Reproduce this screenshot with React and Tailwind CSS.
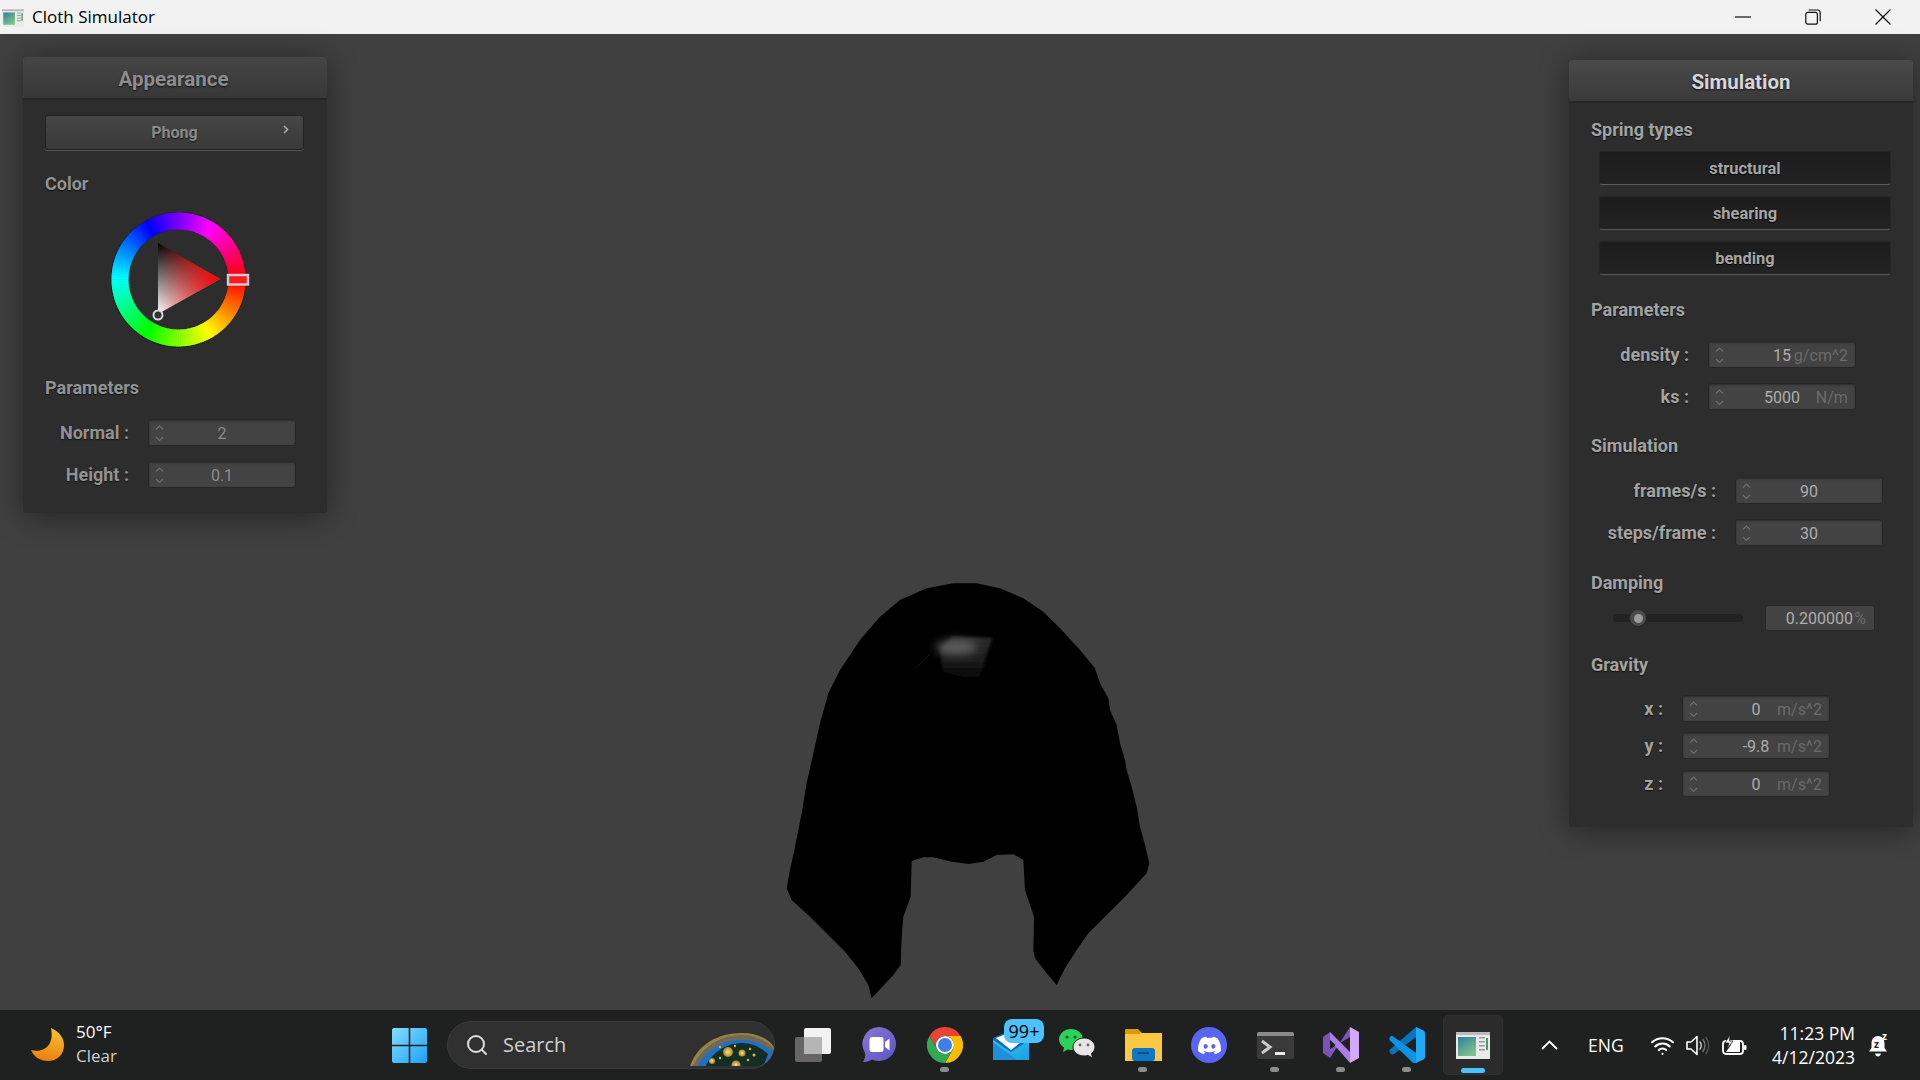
import { Search, Wifi } from "lucide-react";
import { FaDiscord } from "react-icons/fa";

const labelCls = "text-[18px] leading-[22px] font-bold [text-shadow:0_1px_1px_#111]";

// little up/down arrows of a number box
function Spinner() {
  return (
    <svg width="9" height="20" viewBox="0 0 9 20" fill="none" stroke="#6e6e6e" strokeWidth="1.2" className="shrink-0">
      <polyline points="1,6.5 4.5,3 8,6.5" />
      <polyline points="1,14 4.5,17.5 8,14" />
    </svg>
  );
}

function NumberBox({ value, unit, dim }) {
  return (
    <div className="relative w-[148px] h-[27px] rounded-[3px] bg-[#434343] border border-[#272727] shadow-[inset_0_1px_2px_#2c2c2c] flex items-center justify-center">
      <div className="absolute left-[6px] top-[3px]">
        <Spinner />
      </div>
      <span className={`pt-[2px] text-[16px] leading-none ${dim ? "text-[#8c8c8c]" : "text-[#adadad]"}`}>{value}</span>
      {unit && <span className="absolute right-[7px] top-[6px] text-[16px] leading-none tracking-[0.1px] text-[#6a6a6a]">{unit}</span>}
    </div>
  );
}

function Row({ label, labelCl, textCl, className, children }) {
  return (
    <div className={`flex items-center ${className}`}>
      <div className={`${labelCl} ${textCl} text-right mr-[19px] ${labelCls}`}>{label}</div>
      {children}
    </div>
  );
}

function PushButton({ label, className }) {
  return (
    <div className={`w-[292px] h-[34px] ml-[30px] pt-[2px] rounded-[3px] bg-gradient-to-b from-[#1c1c1c] to-[#232323] border border-[#262626] border-b-[#5a5a5a] flex items-center justify-center text-[16.4px] font-bold text-[#a6a6a6] [text-shadow:0_1px_1px_#000] ${className}`}>
      {label}
    </div>
  );
}

function ColorWheel() {
  const cx = 67.5;
  const cy = 67.5;
  const segs = Array.from({ length: 180 }, (_, i) => {
    const a0 = ((i * 2 - 0.3) * Math.PI) / 180;
    const a1 = (((i + 1) * 2 + 0.3) * Math.PI) / 180;
    const pt = (r, a) => `${cx + r * Math.cos(a)} ${cy + r * Math.sin(a)}`;
    return {
      d: `M${pt(67, a0)} A67 67 0 0 1 ${pt(67, a1)} L${pt(50, a1)} A50 50 0 0 0 ${pt(50, a0)} Z`,
      fill: `hsl(${i * 2},100%,50%)`,
    };
  });
  return (
    <svg width="142" height="140" viewBox="0 0 142 140" className="ml-[88px] mt-[17px] block">
      <defs>
        <linearGradient id="triBase" x1="0" y1="0" x2="0" y2="1">
          <stop offset="0" stopColor="#000" />
          <stop offset="1" stopColor="#fff" />
        </linearGradient>
        <linearGradient id="triHue" x1="0" y1="0" x2="1" y2="0">
          <stop offset="0" stopColor="#ff0000" stopOpacity="0" />
          <stop offset="1" stopColor="#ff0000" />
        </linearGradient>
      </defs>
      <circle cx={cx} cy={cy} r="68" fill="#222" />
      <circle cx={cx} cy={cy} r="50" fill="#2d2d2d" />
      {segs.map((s, i) => (
        <path key={i} d={s.d} fill={s.fill} />
      ))}
      <polygon points="47,31 109,67 47,102" fill="url(#triBase)" />
      <polygon points="47,31 109,67 47,102" fill="url(#triHue)" />
      <rect x="117" y="63" width="20" height="9.5" fill="#ff1a22" stroke="#cfcfcf" strokeWidth="2.4" />
      <circle cx="47" cy="103" r="4.5" fill="#333" stroke="#d8d8d8" strokeWidth="2" />
    </svg>
  );
}

function Cloth() {
  return (
    <svg width="400" height="440" viewBox="0 0 1200 1320" className="absolute left-[760px] top-[536px]">
      <defs>
        <linearGradient id="specBody" x1="0" y1="0" x2="0" y2="1">
          <stop offset="0" stopColor="#2c2c2c" />
          <stop offset="0.55" stopColor="#1a1a1a" />
          <stop offset="1" stopColor="#000" />
        </linearGradient>
        <filter id="specSoft" x="-30%" y="-30%" width="160%" height="160%">
          <feGaussianBlur stdDeviation="4" />
        </filter>
        <filter id="specGlow" x="-60%" y="-100%" width="220%" height="300%">
          <feGaussianBlur stdDeviation="14" />
        </filter>
      </defs>
      <path
        fill="#000"
        d="M335 1285 L325 1245 295 1195 255 1145 210 1100 150 1040 95 990 80 955 90 900 105 830 125 730 140 640 160 550 180 460 205 370 240 300 300 210 360 140 420 90 500 55 580 40 650 40 720 55 790 85 850 125 900 175 960 240 1005 295 1020 340 1045 385 1050 420 1070 465 1080 520 1095 570 1100 600 1115 650 1130 710 1140 770 1155 825 1168 880 1160 910 1100 975 1040 1035 985 1090 950 1140 915 1195 890 1245 860 1210 825 1165 820 1140 822 1040 795 960 790 870 760 853 710 855 670 875 625 882 575 875 520 862 490 862 455 873 452 980 430 1040 425 1100 422 1185 400 1215 Z"
      />
      <polygon points="540,240 575,200 697,203 655,335 548,305" fill="url(#specBody)" filter="url(#specSoft)" />
      <ellipse cx="590" cy="232" rx="62" ry="22" fill="#5e5e5e" filter="url(#specGlow)" />
      <line x1="465" y1="297" x2="510" y2="252" stroke="#1c1c1c" strokeWidth="2" />
    </svg>
  );
}

function AppGlyph({ w, h }) {
  return (
    <svg width={w} height={h} viewBox="0 0 34 27">
      <defs>
        <linearGradient id="appPane" x1="0" y1="0" x2="0.6" y2="1">
          <stop offset="0" stopColor="#2f7f9a" />
          <stop offset="1" stopColor="#7fc28d" />
        </linearGradient>
      </defs>
      <rect width="34" height="27" fill="#e9eaea" />
      <rect width="34" height="3" fill="#b9bcbe" />
      <rect x="2" y="5" width="18" height="19" fill="url(#appPane)" />
      <rect x="23" y="5" width="6" height="1.5" fill="#9a9a9a" />
      <rect x="23" y="9" width="6" height="1.5" fill="#9a9a9a" />
      <rect x="23" y="13" width="6" height="1.5" fill="#9a9a9a" />
      <rect x="23" y="17" width="6" height="1.5" fill="#9a9a9a" />
      <rect x="30" y="6" width="2" height="12" fill="#4d9a5c" />
    </svg>
  );
}

function WinLogo() {
  return (
    <svg width="35" height="35" viewBox="0 0 35 35">
      <defs>
        <linearGradient id="winA" x1="0" y1="0" x2="1" y2="1">
          <stop offset="0" stopColor="#86dcff" />
          <stop offset="1" stopColor="#1aa3f5" />
        </linearGradient>
      </defs>
      <path d="M2 0H16.7V16.7H0V2A2 2 0 0 1 2 0Z M18.3 0H33A2 2 0 0 1 35 2V16.7H18.3Z M0 18.3H16.7V35H2A2 2 0 0 1 0 33Z M18.3 18.3H35V33A2 2 0 0 1 33 35H18.3Z" fill="url(#winA)" />
    </svg>
  );
}

function SearchArt() {
  return (
    <svg width="84" height="48" viewBox="0 0 84 48" className="absolute right-0 top-0">
      <defs>
        <clipPath id="artClip">
          <path d="M0 44 C8 22 28 11 52 11 C66 11 78 16 84 25 V30 C84 38 76 44 68 44 Z" />
        </clipPath>
        <radialGradient id="glow">
          <stop offset="0" stopColor="#ffe27a" />
          <stop offset="1" stopColor="#a8832a" />
        </radialGradient>
      </defs>
      <g clipPath="url(#artClip)">
        <rect width="84" height="48" fill="#9c8240" />
        <path d="M2 46 C11 25 30 13 52 13 C66 13 76 18 84 27 V48 H2Z" fill="#6d6a5a" />
        <path d="M5 48 C14 30 30 18 52 18 C64 18 74 22 84 31 V48 Z" fill="#1f6fc4" />
        <path d="M14 48 C20 31 36 21 52 21 C62 21 70 25 78 32 L72 48 Z" fill="#142e24" />
        <circle cx="38" cy="30" r="5" fill="url(#glow)" />
        <circle cx="52" cy="31" r="3.5" fill="url(#glow)" />
        <circle cx="46" cy="43" r="4.5" fill="url(#glow)" />
        <circle cx="22" cy="39" r="3" fill="url(#glow)" />
        <circle cx="30" cy="25" r="1.2" fill="#d7b64d" />
        <circle cx="45" cy="24" r="1.2" fill="#d7b64d" />
        <circle cx="60" cy="27" r="1.2" fill="#d7b64d" />
        <circle cx="64" cy="33" r="1.5" fill="#d7b64d" />
        <circle cx="58" cy="38" r="1.2" fill="#d7b64d" />
        <circle cx="30" cy="36" r="1.2" fill="#d7b64d" />
      </g>
    </svg>
  );
}

function TaskView() {
  return (
    <svg width="36" height="34" viewBox="0 0 36 34">
      <rect x="9" y="0" width="27" height="26" rx="2" fill="#f2f2f2" />
      <rect x="0" y="9" width="27" height="25" rx="2" fill="#6d6d6d" fillOpacity="0.92" />
      <rect x="9" y="9" width="18" height="17" fill="#b5b5b5" />
    </svg>
  );
}

function ChatIcon() {
  return (
    <svg width="34" height="36" viewBox="0 0 34 36">
      <defs>
        <linearGradient id="chatG" x1="0" y1="0" x2="1" y2="1">
          <stop offset="0" stopColor="#8a76d6" />
          <stop offset="1" stopColor="#5a55c4" />
        </linearGradient>
      </defs>
      <path d="M17 0A17 17 0 1 1 10 32.5C7 34.5 4 35 1 35C3 32 3.5 29 3 26A17 17 0 0 1 17 0Z" fill="url(#chatG)" />
      <rect x="7.5" y="10" width="14" height="15" rx="2.5" fill="#fff" />
      <path d="M23 15L27.5 11.5V23.5L23 20Z" fill="#fff" />
    </svg>
  );
}

function ChromeIcon() {
  return (
    <svg width="36" height="36" viewBox="0 0 36 36">
      <path d="M2.4 9A18 18 0 0 1 33.6 9H18A9 9 0 0 0 10.2 22.5Z" fill="#ea4335" />
      <path d="M33.6 9A18 18 0 0 1 18 36L25.8 22.5A9 9 0 0 0 18 9Z" fill="#fbbc04" />
      <path d="M18 36A18 18 0 0 1 2.4 9L10.2 22.5A9 9 0 0 0 25.8 22.5Z" fill="#34a853" />
      <circle cx="18" cy="18" r="9" fill="#fff" />
      <circle cx="18" cy="18" r="7" fill="#3d7fe6" />
    </svg>
  );
}

function MailIcon() {
  return (
    <div className="relative w-[36px] h-[30px]">
      <svg width="36" height="30" viewBox="0 0 36 30" className="absolute left-0 top-0">
        <defs>
          <linearGradient id="mailG" x1="0" y1="0" x2="1" y2="1">
            <stop offset="0" stopColor="#36c4f6" />
            <stop offset="1" stopColor="#1b9de2" />
          </linearGradient>
        </defs>
        <path d="M0 8L18 0L36 8V30H0Z" fill="#0f6cbd" />
        <path d="M3 8L18 2L33 8L18 20Z" fill="#fff" />
        <path d="M0 10L18 22L36 10V30H0Z" fill="url(#mailG)" />
        <path d="M0 30V12L24 30Z" fill="#1f8fd8" />
      </svg>
      <div className="absolute left-[11px] top-[-11px] w-[40px] h-[24px] rounded-[8px] bg-[#4cc2ff] flex items-center justify-center text-[18px] leading-none text-black font-['Open_Sans',sans-serif]">
        99+
      </div>
    </div>
  );
}

function WeChatIcon() {
  return (
    <svg width="36" height="32" viewBox="0 0 36 32">
      <path d="M12 0C18.6 0 24 4.7 24 10.5S18.6 21 12 21C10.8 21 9.7 20.8 8.6 20.5L4 23L5 18.5C2 16.6 0 13.7 0 10.5C0 4.7 5.4 0 12 0Z" fill="#2ed158" />
      <circle cx="8" cy="8" r="1.6" fill="#155f2b" />
      <circle cx="16" cy="8" r="1.6" fill="#155f2b" />
      <path d="M25 9C31 9 36 13 36 18C36 20.6 34.6 22.9 32.5 24.5L33.5 29L29 26.4C27.7 26.8 26.4 27 25 27C19 27 14 23 14 18S19 9 25 9Z" fill="#e6e6e6" stroke="#1f2020" strokeWidth="1" />
      <circle cx="21" cy="16" r="1.4" fill="#666" />
      <circle cx="29" cy="16" r="1.4" fill="#666" />
    </svg>
  );
}

function FolderIcon() {
  return (
    <svg width="37" height="32" viewBox="0 0 37 32">
      <path d="M1 0H13L17 4H37V8H0V1A1 1 0 0 1 1 0Z" fill="#d89c0c" />
      <path d="M0 5H14L17 4H37V32H0Z" fill="#fcc83f" />
      <rect x="7" y="19" width="23" height="13" rx="3" fill="#0f77c6" />
      <rect x="13" y="23" width="11" height="2" fill="#0a4f8a" />
    </svg>
  );
}

function DiscordIcon() {
  return (
    <div className="w-[36px] h-[36px] rounded-full bg-[#5865f2] flex items-center justify-center text-white">
      <FaDiscord size={25} />
    </div>
  );
}

function TerminalIcon() {
  return (
    <svg width="37" height="27" viewBox="0 0 37 27">
      <rect width="37" height="27" rx="2" fill="#3a3a3a" />
      <path d="M2 0H35A2 2 0 0 1 37 2V4H0V2A2 2 0 0 1 2 0Z" fill="#8a8a8a" />
      <polyline points="5,9 13,15 5,21" fill="none" stroke="#c9c9c9" strokeWidth="3" />
      <rect x="18" y="20" width="10" height="3" fill="#f0f0f0" />
    </svg>
  );
}

function VsIcon() {
  return (
    <svg width="36" height="36" viewBox="0 0 36 36">
      <path d="M0 10L7 5V31L0 26Z" fill="#7a52b8" />
      <path d="M7 31L27 0V10L7 22Z" fill="#7d56bb" />
      <path d="M7 5L27 25V36L7 13Z" fill="#ab7ee6" />
      <path d="M7 13L12.5 18L7 22Z" fill="#1f2020" />
      <path d="M27 0L36 5V31L27 36Z" fill="#d2a8f8" />
    </svg>
  );
}

function CodeIcon() {
  return (
    <svg width="36" height="36" viewBox="0 0 36 36">
      <path d="M27 0V10L5 27Q3 28 1.5 26.5L0.5 25Q0 23.5 1 22.5Z" fill="#0874bd" />
      <path d="M3.5 9Q2.5 8.5 1.5 9.5L0.5 11Q0 12.5 1 13.5L24 36H27V26Z" fill="#0a94e2" />
      <path d="M27 0L34.5 3.5Q36 4.5 36 6V30Q36 31.5 34.5 32.5L27 36Z" fill="#1eaaf5" />
    </svg>
  );
}

function Speaker() {
  return (
    <svg width="24" height="21" viewBox="0 0 24 21" fill="none" strokeLinecap="round">
      <path d="M1 7H5L11 1.5V19.5L5 14H1Z" stroke="#fff" strokeWidth="1.6" strokeLinejoin="round" />
      <path d="M14 7C15.5 9 15.5 12 14 14" stroke="#c8c8c8" strokeWidth="1.4" />
      <path d="M17 4.5C19.5 8 19.5 13 17 16.5" stroke="#777" strokeWidth="1.3" />
      <path d="M20 2.5C23.5 7 23.5 14 20 18.5" stroke="#555" strokeWidth="1.3" />
    </svg>
  );
}

function Battery() {
  return (
    <svg width="25" height="21" viewBox="0 0 25 21" fill="none">
      <rect x="1" y="6" width="20" height="13" rx="3" stroke="#fff" strokeWidth="1.8" />
      <rect x="22" y="10" width="2.5" height="5" rx="1" fill="#fff" />
      <path d="M9 6H18V17H4L9 10Z" fill="#fff" />
      <path d="M8 0L3 8H7L5 14L11 6H7.5Z" fill="#fff" stroke="#1f2020" strokeWidth="0.8" />
    </svg>
  );
}

function BellZz() {
  return (
    <svg width="22" height="28" viewBox="0 -4 22 28">
      <path d="M10 3C5 3 3.5 7 3.5 11V15L1 18.5H19L16.5 15V11C16.5 7 15 3 10 3Z" fill="#fff" />
      <path d="M7 20.5H13C12.6 22.4 11.5 23.5 10 23.5S7.4 22.4 7 20.5Z" fill="#fff" />
      <text x="6" y="15" fontSize="10" fontWeight="700" fill="#1f2020" fontFamily="Noto Sans">z</text>
      <text x="14" y="7" fontSize="10" fontWeight="700" fill="#fff" fontFamily="Noto Sans">z</text>
    </svg>
  );
}

function Slot({ dot, children }) {
  return (
    <div className="relative w-[66px] h-[60px] shrink-0 flex items-center justify-center">
      {children}
      {dot && <div className="absolute left-[28px] bottom-[3px] w-[9px] h-[5px] rounded-full bg-[#8c8c8c]" />}
    </div>
  );
}

function ActiveSlot({ children }) {
  return (
    <div className="relative w-[60px] h-[60px] mx-[3px] shrink-0 rounded-[5px] bg-[#2b2b2b] border border-[#303030] flex items-center justify-center">
      {children}
      <div className="absolute left-[17px] bottom-[1px] w-[24px] h-[5px] rounded-full bg-[#4cc2ff]" />
    </div>
  );
}

export default function App() {
  return (
    <div className="w-[1920px] h-[1080px] flex flex-col overflow-hidden font-['Roboto',sans-serif] bg-[#404040]">
      {/* title bar */}
      <div className="h-[34px] shrink-0 bg-[#f2f2f2] flex items-center">
        <div className="ml-[2px] mt-[1px] flex">
          <AppGlyph w={22} h={18} />
        </div>
        <span className="ml-[8px] text-[17px] text-black font-['Open_Sans',sans-serif]">Cloth Simulator</span>
        <div className="ml-auto flex mr-[2px]">
          <div className="w-[70px] h-[34px] flex items-center justify-center">
            <svg width="16" height="2" viewBox="0 0 16 2"><rect width="16" height="1.2" y="0.4" fill="#111" /></svg>
          </div>
          <div className="w-[70px] h-[34px] flex items-center justify-center">
            <svg width="16" height="16" viewBox="0 0 16 16" fill="none" stroke="#111" strokeWidth="1.2">
              <rect x="0.8" y="3.4" width="11.6" height="11.8" rx="2" />
              <path d="M3.6 1H12.6A2.8 2.8 0 0 1 15.2 3.8V12.2" />
            </svg>
          </div>
          <div className="w-[70px] h-[34px] flex items-center justify-center">
            <svg width="16" height="16" viewBox="0 0 16 16" stroke="#111" strokeWidth="1.2">
              <line x1="0.5" y1="0.5" x2="15.5" y2="15.5" />
              <line x1="15.5" y1="0.5" x2="0.5" y2="15.5" />
            </svg>
          </div>
        </div>
      </div>

      {/* gl canvas with floating windows */}
      <div className="relative flex-1 bg-[#404040]">
        <Cloth />

        {/* Appearance */}
        <div className="absolute left-[23px] top-[23px] w-[304px] h-[456px] rounded-[3px] bg-[#2d2d2d] shadow-[0_3px_30px_rgba(0,0,0,0.45)]">
          <div className="h-[43px] pt-[4px] pr-[3px] rounded-t-[3px] bg-gradient-to-b from-[#454545] to-[#383838] border-b-2 border-[#262626] flex items-center justify-center text-[20.5px] font-bold text-[#8e8e8e] [text-shadow:0_1px_2px_#111]">
            Appearance
          </div>
          <div className="relative ml-[22px] mt-[15px] w-[259px] h-[35px] pt-[1px] rounded-[3px] bg-gradient-to-b from-[#464646] to-[#393939] border border-[#222222] shadow-[0_1px_0_#555555] flex items-center justify-center text-[16px] font-bold text-[#8c8c8c] [text-shadow:0_1px_1px_#111]">
            Phong
            <svg width="6" height="9" viewBox="0 0 6 9" fill="none" stroke="#aaaaaa" strokeWidth="1.5" className="absolute right-[14px] top-[9px]">
              <polyline points="1,1 4.5,4.5 1,8" />
            </svg>
          </div>
          <div className={`ml-[22px] mt-[23px] text-[#939393] ${labelCls}`}>Color</div>
          <ColorWheel />
          <div className={`ml-[22px] mt-[25px] text-[#939393] ${labelCls}`}>Parameters</div>
          <Row label="Normal :" labelCl="w-[106px]" textCl="text-[#939393]" className="mt-[20px]">
            <NumberBox value="2" dim />
          </Row>
          <Row label="Height :" labelCl="w-[106px]" textCl="text-[#939393]" className="mt-[15px]">
            <NumberBox value="0.1" dim />
          </Row>
        </div>

        {/* Simulation */}
        <div className="absolute left-[1569px] top-[26px] w-[344px] h-[767px] rounded-[3px] bg-[#2d2d2d] shadow-[0_3px_30px_rgba(0,0,0,0.45)]">
          <div className="h-[43px] pt-[4px] rounded-t-[3px] bg-gradient-to-b from-[#4a4a4a] to-[#3a3a3a] border-b-2 border-[#262626] flex items-center justify-center text-[20.5px] font-bold text-[#d6d6d6] [text-shadow:0_1px_2px_#111]">
            Simulation
          </div>
          <div className={`ml-[22px] mt-[16px] text-[#a3a3a3] ${labelCls}`}>Spring types</div>
          <PushButton label="structural" className="mt-[10px]" />
          <PushButton label="shearing" className="mt-[11px]" />
          <PushButton label="bending" className="mt-[11px]" />

          <div className={`ml-[22px] mt-[24px] text-[#a3a3a3] ${labelCls}`}>Parameters</div>
          <Row label="density :" labelCl="w-[120px]" textCl="text-[#a3a3a3]" className="mt-[20px]">
            <NumberBox value="15" unit="g/cm^2" />
          </Row>
          <Row label="ks :" labelCl="w-[120px]" textCl="text-[#a3a3a3]" className="mt-[15px]">
            <NumberBox value="5000" unit="N/m" />
          </Row>

          <div className={`ml-[22px] mt-[25px] text-[#a3a3a3] ${labelCls}`}>Simulation</div>
          <Row label="frames/s :" labelCl="w-[147px]" textCl="text-[#a3a3a3]" className="mt-[20px]">
            <NumberBox value="90" />
          </Row>
          <Row label="steps/frame :" labelCl="w-[147px]" textCl="text-[#a3a3a3]" className="mt-[15px]">
            <NumberBox value="30" />
          </Row>

          <div className={`ml-[22px] mt-[26px] text-[#a3a3a3] ${labelCls}`}>Damping</div>
          <div className="mt-[11px] ml-[44px] flex items-center">
            <div className="relative w-[130px] h-[8px] rounded-full bg-[#222222]">
              <div className="absolute left-[16px] top-[-5px] w-[18px] h-[18px] rounded-full bg-[#4a4a4a] border border-[#252525] flex items-center justify-center">
                <div className="w-[9px] h-[9px] rounded-full bg-[#9a9a9a]" />
              </div>
            </div>
            <div className="relative ml-[22px] w-[110px] h-[26px] pt-[2px] rounded-[3px] bg-[#434343] border border-[#272727] flex items-center justify-end pr-[21px] text-[16px] leading-none text-[#adadad]">
              0.200000
              <span className="absolute right-[8px] top-[5px] text-[16px] leading-none text-[#6a6a6a]">%</span>
            </div>
          </div>

          <div className={`ml-[22px] mt-[23px] text-[#a3a3a3] ${labelCls}`}>Gravity</div>
          <Row label="x :" labelCl="w-[94px]" textCl="text-[#a3a3a3]" className="mt-[19px]">
            <NumberBox value="0" unit="m/s^2" />
          </Row>
          <Row label="y :" labelCl="w-[94px]" textCl="text-[#a3a3a3]" className="mt-[10px]">
            <NumberBox value="-9.8" unit="m/s^2" />
          </Row>
          <Row label="z :" labelCl="w-[94px]" textCl="text-[#a3a3a3]" className="mt-[11px]">
            <NumberBox value="0" unit="m/s^2" />
          </Row>
        </div>
      </div>

      {/* taskbar */}
      <div className="h-[70px] shrink-0 bg-[#1f2020] flex items-center font-['Open_Sans',sans-serif]">
        <div className="w-[376px] shrink-0 flex items-center pl-[31px]">
          <svg width="33" height="34" viewBox="0 0 33 34">
            <defs>
              <linearGradient id="moonG" x1="0.6" y1="0" x2="0.4" y2="1">
                <stop offset="0" stopColor="#f7c32e" />
                <stop offset="1" stopColor="#ec7d12" />
              </linearGradient>
            </defs>
            <path d="M20 0C30 4 33 12 33 17C33 27 26 33 17 33C9 33 3 29 0 22C10 25 24 20 20 0Z" fill="url(#moonG)" />
          </svg>
          <div className="ml-[12px] mb-[2px] flex flex-col">
            <span className="text-[17px] leading-[24px] text-white">50°F</span>
            <span className="text-[17px] leading-[24px] text-[#cfcfcf]">Clear</span>
          </div>
        </div>
        <Slot>
          <WinLogo />
        </Slot>
        <div className="relative ml-[5px] w-[328px] h-[48px] shrink-0 rounded-full bg-[#303030] border border-[#3a3a3a] flex items-center pl-[17px] overflow-hidden">
          <Search size={24} color="#dddddd" strokeWidth={2} />
          <span className="ml-[14px] text-[20px] text-[#d0d0d0]">Search</span>
          <SearchArt />
        </div>
        <div className="ml-[5px] flex items-center">
          <Slot><TaskView /></Slot>
          <Slot><ChatIcon /></Slot>
          <Slot dot><ChromeIcon /></Slot>
          <Slot><MailIcon /></Slot>
          <Slot><WeChatIcon /></Slot>
          <Slot dot><FolderIcon /></Slot>
          <Slot><DiscordIcon /></Slot>
          <Slot dot><TerminalIcon /></Slot>
          <Slot dot><VsIcon /></Slot>
          <Slot dot><CodeIcon /></Slot>
          <ActiveSlot><AppGlyph w={34} h={27} /></ActiveSlot>
        </div>
        <div className="flex-1 flex items-center text-white pl-[35px]">
          <svg width="17" height="10" viewBox="0 0 17 10" fill="none" stroke="#fff" strokeWidth="1.8">
            <polyline points="1,9 8.5,1.5 16,9" />
          </svg>
          <span className="ml-[30px] text-[17.5px]">ENG</span>
          <div className="ml-[26px] flex">
            <Wifi size={25} color="#fff" strokeWidth={2} />
          </div>
          <div className="ml-[11px] flex">
            <Speaker />
          </div>
          <div className="ml-[12px] flex">
            <Battery />
          </div>
          <div className="ml-auto flex flex-col items-end text-[17.5px] leading-[24px]">
            <span>11:23 PM</span>
            <span>4/12/2023</span>
          </div>
          <div className="ml-[13px] mr-[30px] mb-[4px] flex">
            <BellZz />
          </div>
        </div>
      </div>
    </div>
  );
}
